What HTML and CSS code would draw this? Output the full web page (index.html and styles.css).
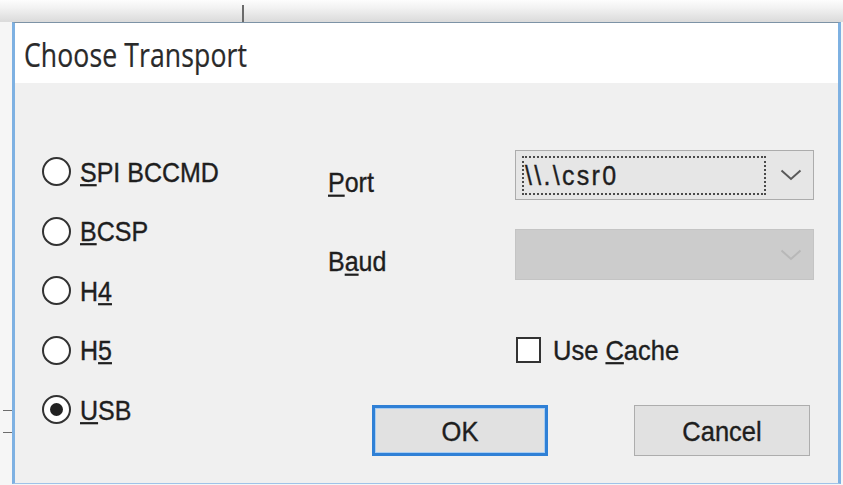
FILE: index.html
```html
<!DOCTYPE html>
<html>
<head>
<meta charset="utf-8">
<link rel="stylesheet" href="styles.css">
</head>
<body>
<div class="top"><div class="tick"></div></div>
<div class="main">
  <div class="edge"><div class="etick"></div><div class="etick second"></div></div>
  <div class="win">
    <div class="titlebar"><span class="title">Choose Transport</span></div>
    <div class="content">
      <div class="radios">
        <div class="radio"><span class="circle"></span><span class="lbl"><u>S</u>PI BCCMD</span></div>
        <div class="radio"><span class="circle"></span><span class="lbl"><u>B</u>CSP</span></div>
        <div class="radio"><span class="circle"></span><span class="lbl">H<u>4</u></span></div>
        <div class="radio"><span class="circle"></span><span class="lbl">H<u>5</u></span></div>
        <div class="radio"><span class="circle checked"><span class="dot"></span></span><span class="lbl"><u>U</u>SB</span></div>
      </div>
      <div class="form">
        <div class="row port">
          <span class="flabel"><u>P</u>ort</span>
          <div class="combo">
            <span class="focus"><span class="ctext">\\.\csr0</span></span>
            <svg class="chev" width="22" height="12" viewBox="0 0 22 12"><polyline points="1.5,1.5 11,10 20.5,1.5" fill="none" stroke="#5a5a5a" stroke-width="2"/></svg>
          </div>
        </div>
        <div class="row baud">
          <span class="flabel">B<u>a</u>ud</span>
          <div class="combo disabled">
            <svg class="chev" width="22" height="12" viewBox="0 0 22 12"><polyline points="1.5,1.5 11,10 20.5,1.5" fill="none" stroke="#b8b8b8" stroke-width="2"/></svg>
          </div>
        </div>
        <div class="row check">
          <span class="box"></span><span class="clbl">Use <u>C</u>ache</span>
        </div>
        <div class="row btns">
          <div class="btn def"><span class="btxt">OK</span></div>
          <div class="btn"><span class="btxt">Cancel</span></div>
        </div>
      </div>
    </div>
  </div>
</div>
</body>
</html>
```
FILE: styles.css
```css
html, body {
  margin: 0;
  padding: 0;
}
body {
  width: 843px;
  height: 485px;
  overflow: hidden;
  background: #f6f6f6;
  font-family: "Liberation Sans", Arial, sans-serif;
  color: #1e1e1e;
}
.top {
  height: 22px;
  background: linear-gradient(#fdfdfd 0px, #f2f2f2 8px, #dcdcdc 21px);
  display: flex;
  align-items: flex-end;
}
.tick {
  margin-left: 242px;
  width: 2px;
  height: 17px;
  background: #6b6b6b;
}
.main {
  display: flex;
  height: 463px;
}
.edge {
  width: 12px;
  display: flex;
  flex-direction: column;
  padding-top: 388px;
  box-sizing: border-box;
}
.etick {
  margin-left: 3px;
  width: 9px;
  height: 1px;
  background: #6d6d6d;
}
.etick.second {
  margin-top: 21px;
}
.win {
  width: 823px;
  height: 460px;
  border-left: 3px solid #7eb1e2;
  border-right: 3px solid #7eb1e2;
  border-top: 1px solid #7d93a6;
  border-bottom: 1px solid #9fc3e8;
  display: flex;
  flex-direction: column;
}
.titlebar {
  height: 60px;
  background: #ffffff;
  padding-left: 9px;
  display: flex;
  align-items: center;
}
.title {
  display: inline-block;
  font-family: "Open Sans", "Noto Sans", sans-serif;
  font-size: 26.6px;
  color: #2a2a2a;
  transform: scaleY(1.2);
  transform-origin: 0 50%;
  margin-top: 4px;
  letter-spacing: 0.1px;
  -webkit-text-stroke: 0.2px #2a2a2a;
}
.content {
  flex: 1;
  background: #f0f0f0;
  display: flex;
}
.radios {
  width: 313px;
  padding-left: 27px;
  padding-top: 59px;
  box-sizing: border-box;
  display: flex;
  flex-direction: column;
}
.radio {
  height: 59.5px;
  display: flex;
  align-items: center;
}
.circle {
  width: 25px;
  height: 25px;
  border: 2px solid #333333;
  border-radius: 50%;
  background: #ffffff;
  display: flex;
  align-items: center;
  justify-content: center;
  flex: none;
}
.dot {
  width: 13px;
  height: 13px;
  border-radius: 50%;
  background: #222222;
}
.lbl, .flabel, .clbl, .btxt, .ctext {
  display: inline-block;
  transform: scaleY(1.1);
  -webkit-text-stroke: 0.35px #1e1e1e;
}
.lbl {
  margin-left: 9px;
  font-size: 25px;
  line-height: 30px;
}
.form {
  flex: 1;
  display: flex;
  flex-direction: column;
}
.row {
  display: flex;
}
.port {
  margin-top: 67px;
  height: 50px;
}
.baud {
  margin-top: 29px;
  height: 51px;
}
.flabel {
  width: 187px;
  height: 30px;
  font-size: 25px;
  line-height: 30px;
  margin-top: 16px;
  transform-origin: 0 0;
}
.combo {
  width: 299px;
  box-sizing: border-box;
  border: 1px solid #acacac;
  background: #e6e6e6;
  display: flex;
  align-items: center;
  padding-left: 6px;
  padding-right: 11px;
}
.combo.disabled {
  background: #cccccc;
  border-color: #c4c4c4;
  justify-content: flex-end;
}
.focus {
  width: 244px;
  height: 39px;
  box-sizing: border-box;
  border: 2px dotted #4a4a4a;
  display: flex;
  align-items: center;
  padding-left: 1px;
}
.ctext {
  font-size: 25px;
  letter-spacing: 2.3px;
  line-height: 30px;
}
.chev {
  margin-left: auto;
  flex: none;
}
.check {
  margin-top: 57px;
  height: 26px;
  padding-left: 188px;
  align-items: center;
}
.box {
  width: 25px;
  height: 26px;
  box-sizing: border-box;
  border: 2px solid #333333;
  background: #ffffff;
  flex: none;
}
.clbl {
  margin-left: 12px;
  font-size: 25.5px;
  line-height: 30px;
}
.btns {
  margin-top: 42px;
  padding-left: 44px;
  gap: 86px;
}
.btn {
  width: 176px;
  height: 51px;
  box-sizing: border-box;
  border: 1px solid #adadad;
  background: #e1e1e1;
  display: flex;
  align-items: center;
  justify-content: center;
}
.btxt {
  font-size: 25.5px;
  line-height: 30px;
}
.btn.def {
  border: 3px solid #2f80d6;
  box-shadow: inset 0 0 0 1px #a8cdf2;
}
```
